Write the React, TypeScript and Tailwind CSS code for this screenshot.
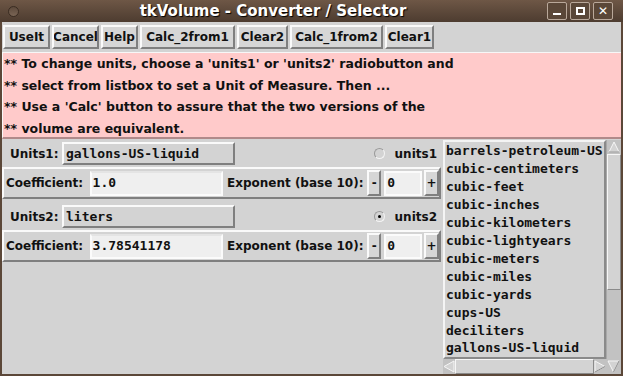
import React from 'react';

const UNITS = [
  'barrels-petroleum-US',
  'cubic-centimeters',
  'cubic-feet',
  'cubic-inches',
  'cubic-kilometers',
  'cubic-lightyears',
  'cubic-meters',
  'cubic-miles',
  'cubic-yards',
  'cups-US',
  'deciliters',
  'gallons-US-liquid',
];

// widths measured off the Tk window
const BUTTONS: [string, string][] = [
  ['UseIt', 'w-[47px]'],
  ['Cancel', 'w-[47px]'],
  ['Help', 'w-[37px]'],
  ['Calc_2from1', 'w-[95px]'],
  ['Clear2', 'w-[51px]'],
  ['Calc_1from2', 'w-[93px]'],
  ['Clear1', 'w-[49px]'],
];

const raised = 'border-2 border-t-[#fafafa] border-l-[#fafafa] border-r-[#7f7f7f] border-b-[#7f7f7f]';

function TkButton({ label, className = '' }: { label: string; className?: string }) {
  return (
    <div className={`flex items-center justify-center bg-[#d6d6d6] whitespace-nowrap overflow-hidden ${raised} ${className}`}>
      {label}
    </div>
  );
}

function UnitsRow({ label, value, radio, checked }: { label: string; value: string; radio: string; checked: boolean }) {
  return (
    <div className="flex items-center h-[27px] pl-[8px] pr-[4px]">
      <span className="w-[52px]">{label}</span>
      <div className={`w-[173px] h-[23px] flex items-center pl-[2px] ${raised} bg-[#d3d3d3] font-['DejaVu_Sans_Mono'] font-bold text-[13px]`}>
        {value}
      </div>
      <div className="flex-1" />
      <div className="w-[11px] h-[11px] rounded-full border border-[#f4f4f4] border-t-[#9a9a9a] border-l-[#9a9a9a] bg-[#d3d3d3] flex items-center justify-center mr-[10px]">
        {checked && <div className="w-[3px] h-[3px] rounded-full bg-black" />}
      </div>
      <span>{radio}</span>
    </div>
  );
}

function CoefRow({ value }: { value: string }) {
  return (
    <div className={`flex items-center h-[32px] pl-[2px] ${raised}`}>
      <span className="w-[84px]">Coefficient:</span>
      <div className="w-[134px] h-[25px] bg-[#efefef] border-2 border-[#fbfbfb] border-t-[#e4e4e4] flex items-center pl-[1px] font-['DejaVu_Sans_Mono'] font-bold text-[13px]">
        {value}
      </div>
      <span className="ml-[4px] w-[141px]">Exponent (base 10):</span>
      <TkButton label="-" className="w-[14px] h-[26px] text-[12px]" />
      <div className="ml-[3px] w-[38px] h-[25px] bg-[#efefef] border-2 border-[#fbfbfb] flex items-center pl-[1px] font-['DejaVu_Sans_Mono'] font-bold text-[13px]">
        0
      </div>
      <TkButton label="+" className="ml-[2px] w-[15px] h-[26px] text-[12px]" />
    </div>
  );
}

export default function App() {
  return (
    <div className="w-[623px] h-[376px] flex flex-col font-['DejaVu_Sans',sans-serif] font-bold text-[12px] text-[#111] overflow-hidden">
      {/* title bar */}
      <div className="h-[22px] flex items-center bg-gradient-to-b from-[#6e5746] to-[#4d3c30] relative">
        <div className="ml-[8px] w-[11px] h-[11px] rounded-full border border-[#3a2c22] bg-gradient-to-b from-[#5d4a3c] to-[#7a6555]" />
        <div className="flex-1 text-center text-white text-[15px] font-bold [text-shadow:1px_1px_1px_#000] -ml-[20px]">
          tkVolume - Converter / Selector
        </div>
        <div className="flex gap-[3px] mr-[10px]">
          <div className="w-[20px] h-[18px] border border-[#b9a89a] rounded-[2px] bg-[#5a4738] flex items-end justify-center pb-[4px]">
            <div className="w-[8px] h-[2px] bg-white" />
          </div>
          <div className="w-[20px] h-[18px] border border-[#b9a89a] rounded-[2px] bg-[#5a4738] flex items-center justify-center">
            <div className="w-[9px] h-[8px] border-2 border-white" />
          </div>
          <div className="w-[20px] h-[18px] border border-[#b9a89a] rounded-[2px] bg-[#5a4738] flex items-center justify-center text-white text-[12px] font-bold leading-none">
            ✕
          </div>
        </div>
      </div>

      {/* body */}
      <div className="flex-1 flex flex-col bg-[#d3d3d3] border-x-2 border-b-[3px] border-[#5b4738]">
        <div className="flex gap-[2px] mt-[3px] ml-[1px] h-[24px]">
          {BUTTONS.map(([b, w]) => (
            <TkButton key={b} label={b} className={`${w} h-[24px]`} />
          ))}
        </div>

        <div className="mt-[3px] h-[87px] bg-[#ffcaca] border-t border-l border-[#f7f7f7] border-b-2 border-b-[#b08a8a] pl-[1px] leading-[21.5px] text-[12.5px]">
          <div>** To change units, choose a 'units1' or 'units2' radiobutton and</div>
          <div>** select from listbox to set a Unit of Measure. Then ...</div>
          <div>** Use a 'Calc' button to assure that the two versions of the</div>
          <div>** volume are equivalent.</div>
        </div>

        <div className="flex flex-1 mt-[1px]">
          <div className="w-[439px] flex flex-col">
            <UnitsRow label="Units1:" value="gallons-US-liquid" radio="units1" checked={false} />
            <CoefRow value="1.0" />
            <div className="h-[4px]" />
            <UnitsRow label="Units2:" value="liters" radio="units2" checked />
            <CoefRow value="3.78541178" />
          </div>

          <div className="ml-[2px] flex-1 flex flex-col">
            <div className="flex flex-1">
              <div className="flex-1 border-2 border-t-[#f4f4f4] border-l-[#f4f4f4] border-r-[#8a8a8a] border-b-[#8a8a8a] pl-[1px] font-['DejaVu_Sans_Mono',monospace] font-bold text-[13px] leading-[17.95px] overflow-hidden whitespace-nowrap">
                {UNITS.map(u => (
                  <div key={u}>{u}</div>
                ))}
              </div>
              {/* vertical scrollbar */}
              <div className="w-[15px] flex flex-col bg-[#c2c2c2] border-l border-[#a8a8a8]">
                <svg width="14" height="14" viewBox="0 0 14 14" className="shrink-0">
                  <polygon points="7,2 12,12 2,12" fill="#d3d3d3" stroke="#f6f6f6" strokeWidth="1" />
                  <polyline points="12,12 2,12" stroke="#8a8a8a" strokeWidth="1" fill="none" />
                </svg>
                <div className="h-[136px] bg-[#d3d3d3] border border-t-[#f6f6f6] border-l-[#f6f6f6] border-r-[#8a8a8a] border-b-[#8a8a8a]" />
              </div>
            </div>
            {/* horizontal scrollbar */}
            <div className="h-[15px] flex bg-[#c2c2c2]">
              <svg width="12" height="15" viewBox="0 0 12 15" className="shrink-0">
                <polygon points="1,7.5 11,2 11,13" fill="#d3d3d3" stroke="#f6f6f6" strokeWidth="1" />
              </svg>
              <div className="flex-1 bg-[#d3d3d3] border border-t-[#f6f6f6] border-l-[#f6f6f6] border-r-[#8a8a8a] border-b-[#8a8a8a]" />
              <svg width="12" height="15" viewBox="0 0 12 15" className="shrink-0">
                <polygon points="11,7.5 1,2 1,13" fill="#d3d3d3" stroke="#f6f6f6" strokeWidth="1" />
                <polyline points="11,7.5 1,13" stroke="#8a8a8a" fill="none" />
              </svg>
              <svg width="15" height="15" viewBox="0 0 15 15" className="shrink-0 bg-[#c2c2c2]">
                <polygon points="7.5,13 2,2 13,2" fill="#d3d3d3" stroke="#f6f6f6" strokeWidth="1" />
                <polyline points="7.5,13 13,2" stroke="#8a8a8a" fill="none" />
              </svg>
            </div>
          </div>
        </div>
      </div>
    </div>
  );
}
